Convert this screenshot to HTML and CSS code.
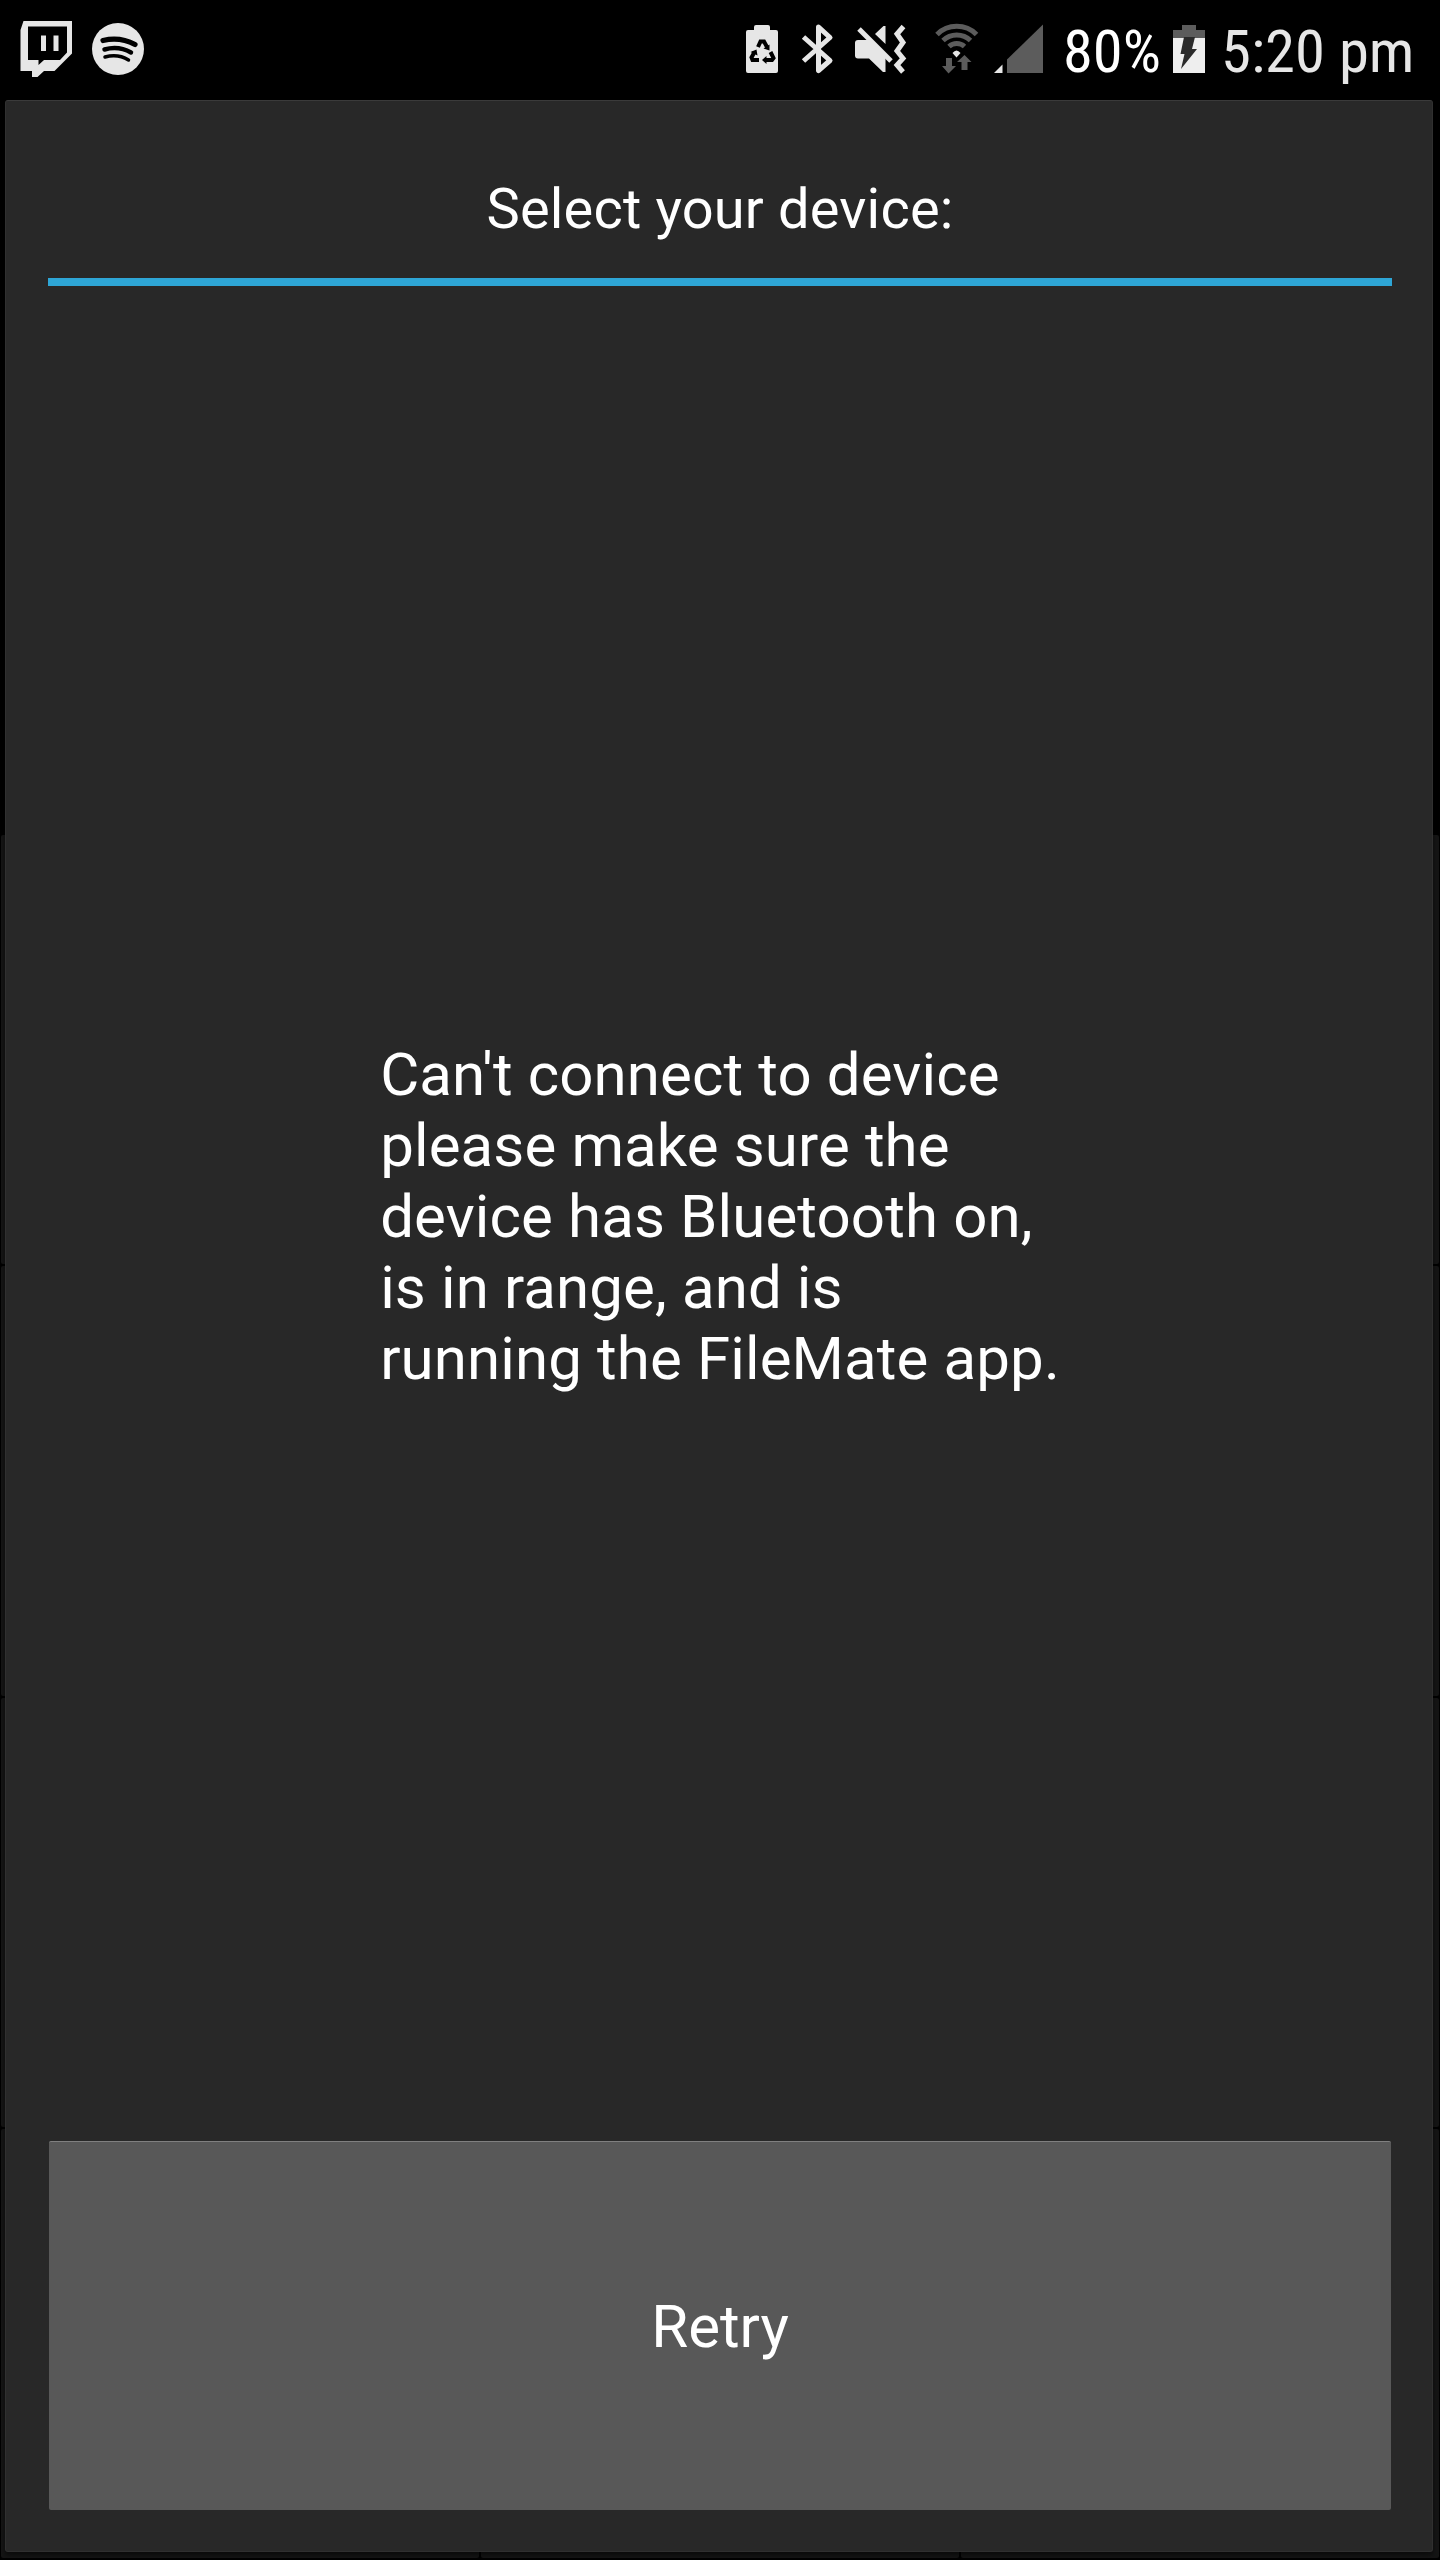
FILE: index.html
```html
<!DOCTYPE html>
<html lang="en">
<head>
<meta charset="utf-8">
<title>Select your device</title>
<link rel="stylesheet" href="styles.css">
</head>
<body>
<header class="status">
  <svg class="status-art" viewBox="0 0 1440 100" width="1440" height="100">
    <g class="light">
      <path fill-rule="evenodd" d="M23.5 21H72V53.500L54.500 71H44L37.500 77H32V71H20.500V30ZM28 26.500V60H38.500V65L44 60H60L67 52.500V26.500Z"/>
      <path d="M41 35.500h5V51h-5zM53.500 35.500h5V51h-5z"/>
      <circle cx="118" cy="49" r="26"/>
      <path d="M756 25h12q2 0 2 2v3h6q2 0 2 2V71q0 2-2 2h-28q-2 0-2-2V32q0-2 2-2h6v-3q0-2 2-2Z"/>
      <path d="M875 34L883.500 26H885.500V44ZM858 40H870L885.500 55.500V72H883L869 58.500H858q-3 0-3-3V43q0-3 3-3Z"/>
      <path d="M952.500 53q4-5 8 0l-4 4.500Z"/>
      <path d="M994 73h8.500V64.500Z"/>
      <path d="M1173 38h32v35h-32z" fill="#eee"/>
    </g>
    <g class="cut">
      <path stroke-width="5.200" d="M103 40.500q17-4 32 4"/>
      <path stroke-width="4.500" d="M104.500 49.500q14-4 26.500 3"/>
      <path stroke-width="3.500" d="M105 57q13-3.500 23.500 3"/>
    </g>
    <g class="recycle">
      <path d="M758 47L760.500 41.500h3.500L767 47M770.500 52l3 6-1.500 2h-7M759 60h-6.500l-1-2.500 3-5.500"/>
    </g>
    <g class="recycle-tips"><path d="M763.500 48.500l6-4v6ZM766.500 56v8l-4.500-4ZM750.500 52l6-2.500 1 6Z"/></g>
    <path class="stroke" stroke-linejoin="round" d="M803.500 37L830 60.500 818.500 70.500V27L830 37.500 803.500 61"/>
    <path class="stroke" d="M859 29L891 61"/>
    <path class="stroke" d="M903.500 26.500L897 34 903 42.500 897 51 903 58.500 897 65 903 72"/>
    <g class="wifi"><path d="M937 34.500a28 28 0 0 1 39.500 0M943 40.500a20 20 0 0 1 27.500 0M949 46.500a11.500 11.500 0 0 1 15.500 0"/></g>
    <g class="dim">
      <path d="M946 58h6v8h4l-7.500 7.500L942 66h4ZM961.500 70V62h-4.500l7.500-7 7 7h-4v8Z"/>
      <path d="M1007 73V59.500L1043 24.500V73Z"/>
      <path d="M1173 38v-8h9v-5h14v5h9v8Z"/>
    </g>
    <path fill="#2a2a2a" d="M1184 37h11l-3 12h5l-16 20 3.500-15h-4Z"/>
    <text class="pct" x="1063" y="72" textLength="98" lengthAdjust="spacingAndGlyphs">80%</text>
    <text class="clock" x="1221" y="72" textLength="193.500" lengthAdjust="spacingAndGlyphs">5:20 pm</text>
  </svg>
</header>
<main class="stage">
  <div class="tiles">
    <i></i><i></i><i></i><i></i><i></i><i></i><i></i><i></i><i></i><i></i><i></i><i></i>
  </div>
  <section class="dialog">
    <h1 class="title">Select your device:</h1>
    <div class="content"><p class="message">Can't connect to device<br>please make sure the<br>device has Bluetooth on,<br>is in range, and is<br>running the FileMate app.</p></div>
    <button class="retry">Retry</button>
  </section>
</main>
</body>
</html>
```

FILE: styles.css
```css
* { box-sizing: border-box; }
body {
  margin: 0;
  width: 1440px;
  height: 2560px;
  overflow: hidden;
  background: #000;
  color: #fff;
  font-family: Roboto, sans-serif;
}
.status { height: 100px; }
.status-art { display: block; }
.light { fill: #e6e6e6; }
.dim { fill: #5c5c5c; }
.cut { fill: none; stroke: #000; stroke-linecap: round; }
.recycle { fill: none; stroke: #000; stroke-width: 4; }
.recycle-tips { fill: #000; }
.stroke { fill: none; stroke: #e6e6e6; stroke-width: 5; }
.wifi { fill: none; stroke: #5c5c5c; stroke-width: 5; }
.pct, .clock {
  font-family: "Roboto Condensed", Roboto, sans-serif;
  font-size: 60px;
  fill: #fff;
}
.clock { fill: #e6e6e6; }

.stage { display: grid; height: 2460px; }
.tiles {
  grid-area: 1 / 1;
  display: grid;
  grid-template-columns: repeat(3, 1fr);
  grid-template-rows: repeat(4, 1fr);
  gap: 2px;
  padding: 735px 1px 2px;
}
.tiles i { background: #151515; border-radius: 2px; }
.dialog {
  grid-area: 1 / 1;
  display: flex;
  flex-direction: column;
  margin: 0 7px 8px 5px;
  padding: 0 41px 41px 43px;
  background: #282828;
  border: 1px solid #303030;
  border-top-color: #3a3a3a;
  border-radius: 3px;
  box-shadow: 0 3px 5px #0008;
}
.title {
  height: 185px;
  margin: 0 -1px;
  padding-top: 75px;
  border-bottom: 8px solid #2ea6d6;
  font-size: 56px;
  font-weight: 400;
  line-height: 66px;
  letter-spacing: 0.17px;
  text-align: center;
}
.content {
  flex: 1;
  display: flex;
  justify-content: center;
  padding-top: 753px;
}
.message {
  margin: 0;
  font-size: 60px;
  line-height: 71px;
  letter-spacing: 0.12px;
}
.retry {
  height: 369px;
  padding: 0;
  border: 0;
  border-top: 1px solid #808080;
  border-radius: 2px;
  background: #585858;
  color: #fff;
  font: 60px Roboto, sans-serif;
}
```
